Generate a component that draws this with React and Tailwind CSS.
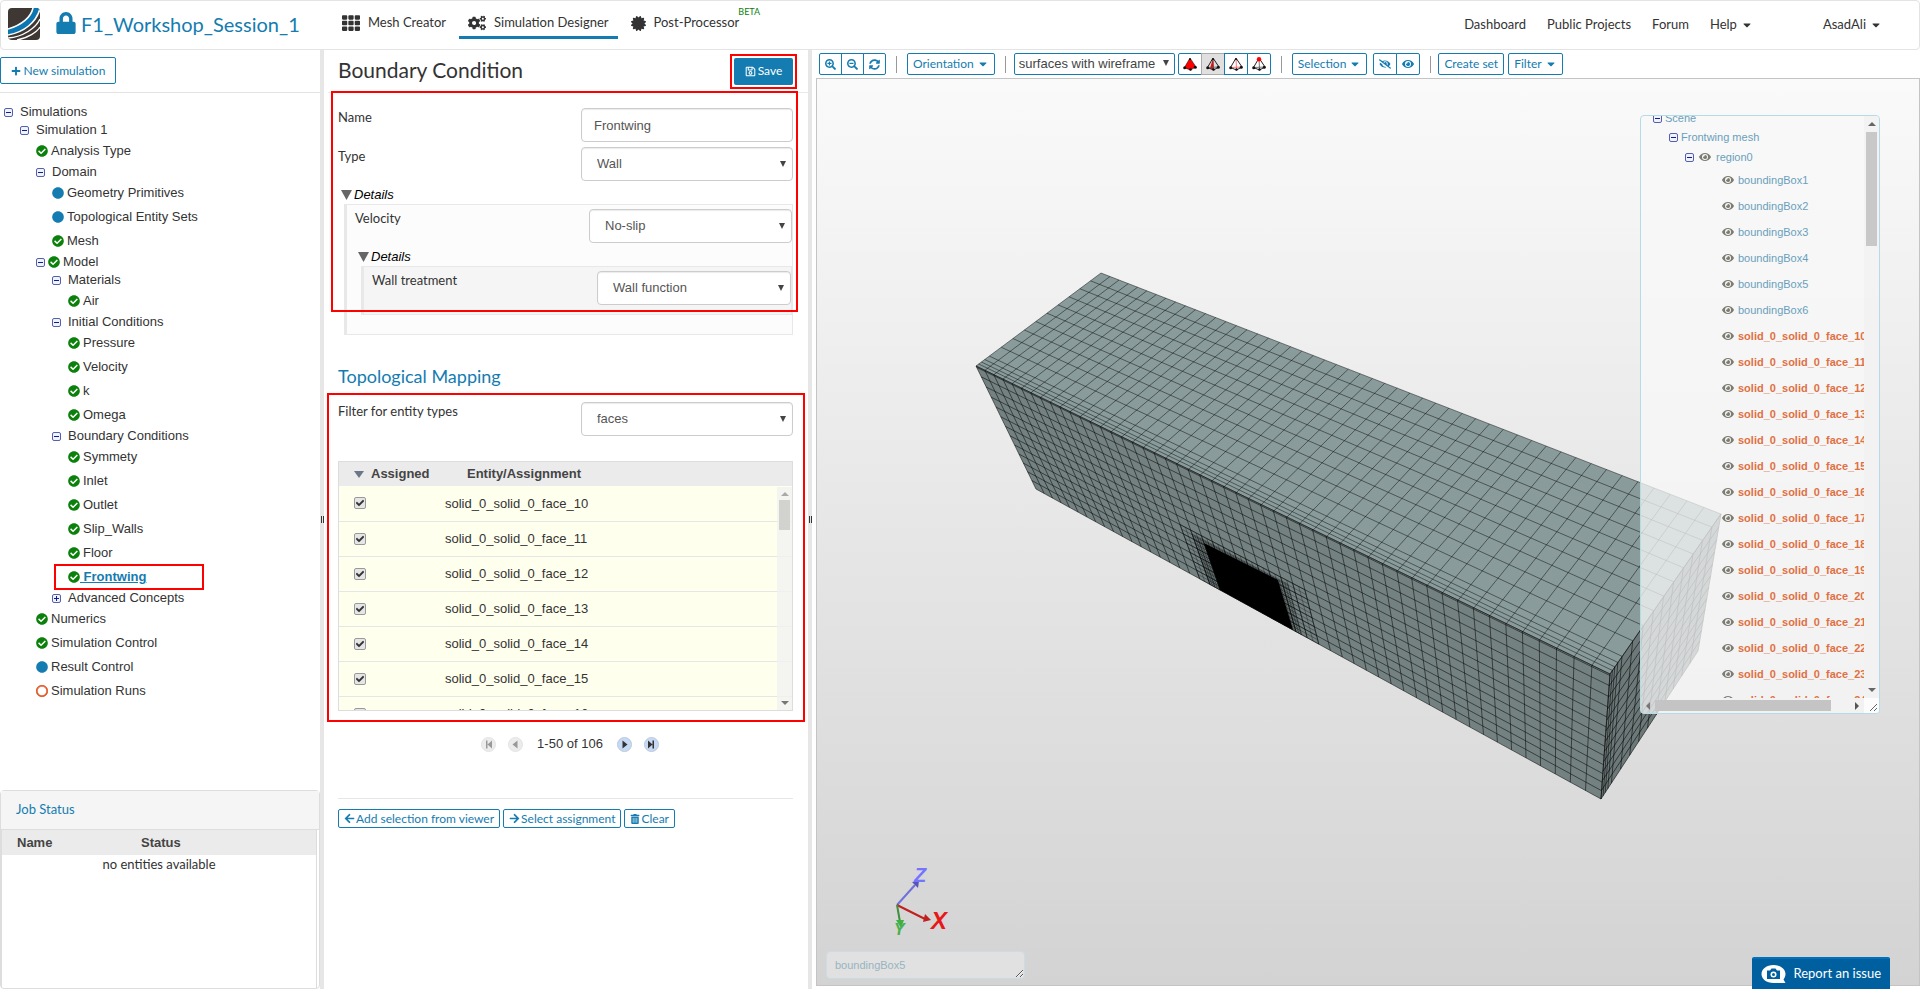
import {
  FaLock, FaTh, FaCogs, FaCertificate, FaPlus, FaRegSave, FaCheckCircle, FaCircle, FaRegCircle, FaEye, FaEyeSlash,
  FaArrowLeft, FaArrowRight, FaTrashAlt, FaCaretDown, FaSearchPlus, FaSearchMinus, FaSyncAlt, FaCheck,
} from 'react-icons/fa'

const treeRows = [
  { level: 0, label: 'Simulations', toggle: 'minus' },
  { level: 1, label: 'Simulation 1', toggle: 'minus' },
  { level: 2, label: 'Analysis Type', status: 'ok' },
  { level: 2, label: 'Domain', toggle: 'minus' },
  { level: 3, label: 'Geometry Primitives', status: 'info' },
  { level: 3, label: 'Topological Entity Sets', status: 'info' },
  { level: 3, label: 'Mesh', status: 'ok' },
  { level: 2, label: 'Model', toggle: 'minus', status: 'ok' },
  { level: 3, label: 'Materials', toggle: 'minus' },
  { level: 4, label: 'Air', status: 'ok' },
  { level: 3, label: 'Initial Conditions', toggle: 'minus' },
  { level: 4, label: 'Pressure', status: 'ok' },
  { level: 4, label: 'Velocity', status: 'ok' },
  { level: 4, label: 'k', status: 'ok' },
  { level: 4, label: 'Omega', status: 'ok' },
  { level: 3, label: 'Boundary Conditions', toggle: 'minus' },
  { level: 4, label: 'Symmety', status: 'ok' },
  { level: 4, label: 'Inlet', status: 'ok' },
  { level: 4, label: 'Outlet', status: 'ok' },
  { level: 4, label: 'Slip_Walls', status: 'ok' },
  { level: 4, label: 'Floor', status: 'ok' },
  { level: 4, label: 'Frontwing', status: 'ok', active: true },
  { level: 3, label: 'Advanced Concepts', toggle: 'plus' },
  { level: 2, label: 'Numerics', status: 'ok' },
  { level: 2, label: 'Simulation Control', status: 'ok' },
  { level: 2, label: 'Result Control', status: 'info' },
  { level: 2, label: 'Simulation Runs', status: 'open' },
]

const indents = ['pl-1', 'pl-5', 'pl-9', 'pl-[52px]', 'pl-[68px]']

const faces = [10, 11, 12, 13, 14, 15, 16]
const boxes = [1, 2, 3, 4, 5, 6]
const sceneFaces = [10, 11, 12, 13, 14, 15, 16, 17, 18, 19, 20, 21, 22, 23, 24]

const toolButton = 'flex h-[22px] items-center border border-[#147cb0] bg-white text-[#147cb0]'

const Toggle = ({ type }) => (
  <svg viewBox="0 0 9 9" className="size-[9px] shrink-0" aria-hidden="true">
    <rect x="0.5" y="0.5" width="8" height="8" rx="1.5" fill="#f1f3fb" stroke="#5560ad" />
    <path d={type === 'plus' ? 'M2 4.5h5M4.5 2v5' : 'M2 4.5h5'} stroke="#0f1a9c" />
  </svg>
)

const Status = ({ status }) => {
  if (status === 'ok') return <FaCheckCircle size={12} className="shrink-0 text-[#0b800b]" />
  if (status === 'info') return <FaCircle size={12} className="shrink-0 text-[#147cb0]" />
  return (
    <FaRegCircle size={12} stroke="#e0531f" strokeWidth={28} className="shrink-0 text-[#e0531f]" />
  )
}

const Highlight = ({ className }) => (
  <div className={`pointer-events-none absolute z-10 border-2 border-[#ff0000] ${className}`} />
)

const TopBar = () => (
  <header className="flex h-[50px] shrink-0 items-center rounded border border-[#e3e3e3] bg-white pl-[7px] pr-[37px] text-[#333333]">
    <svg viewBox="0 0 32 32" className="mb-[2px] size-8 shrink-0" aria-label="SimScale">
      <defs>
        <clipPath id="logo">
          <rect width="32" height="32" rx="4" />
        </clipPath>
      </defs>
      <g clipPath="url(#logo)">
        <rect width="32" height="32" fill="#3e3733" />
        <path d="M0 21C14 17 23 9 25 0h7v1C28 14 17 24 0 27z" fill="#0c76b2" />
        <path d="M0 21C14 17 23 9 25 0" fill="none" stroke="#fff" strokeWidth="1.6" />
        <path d="M0 27C17 24 28 14 32 1" fill="none" stroke="#fff" strokeWidth="1.6" />
        <path d="M0 30C15 29 28 20 32 11M9 32C20 30 29 24 32 19" fill="none" stroke="#fff" strokeWidth="1.4" />
      </g>
    </svg>
    <FaLock size={22} className="ml-[15px] mb-[5px] shrink-0 text-[#147cb0]" />
    <h1 className="mb-[2px] ml-1 w-[252px] shrink-0 text-[20px] leading-6 text-[#147cb0]">F1_Workshop_Session_1</h1>
    <nav className="mb-1 flex items-center gap-1 whitespace-nowrap text-[13px]">
      <a href="#mesh" className="flex h-[31px] items-center gap-2 px-[9px]">
        <FaTh size={18} /> Mesh Creator
      </a>
      <a href="#simulation" className="flex h-[31px] items-center gap-2 border-b-[3px] border-[#147cb0] px-[9px] pt-[3px]">
        <FaCogs size={18} /> Simulation Designer
      </a>
      <a href="#post" className="relative flex h-[31px] items-center gap-2 px-[9px]">
        <FaCertificate size={15} /> Post-Processor
        <span className="absolute -top-[2px] left-full -ml-[10px] text-[9px] leading-3 text-[#0b800b]">BETA</span>
      </a>
    </nav>
    <nav className="mb-px ml-auto flex items-center gap-[21px] whitespace-nowrap text-[13px]">
      <a href="#dashboard">Dashboard</a>
      <a href="#projects">Public Projects</a>
      <a href="#forum">Forum</a>
      <button className="flex items-center gap-1">
        Help <FaCaretDown size={12} />
      </button>
      <button className="ml-[49px] flex items-center gap-1">
        AsadAli <FaCaretDown size={12} />
      </button>
    </nav>
  </header>
)

const Splitter = () => (
  <div className="flex w-1 shrink-0 items-center justify-center bg-[#e6e6e6]">
    <div className="h-[7px] w-[3px] border-x border-[#333333]" />
  </div>
)

const SimulationTree = () => (
  <ul className="pt-[10px] font-['Liberation_Sans',sans-serif] text-[13px]">
    {treeRows.map(({ level, label, toggle, status, active }) => (
      <li key={label} className={`relative flex items-center ${toggle ? 'h-[18px]' : 'h-6'} ${indents[level]}`}>
        {toggle && <Toggle type={toggle} />}
        {toggle && <span className={status ? 'w-[3px]' : 'w-[7px]'} />}
        {status && <Status status={status} />}
        <a
          href="#node"
          className={active ? 'whitespace-pre font-bold text-[#147cb0] underline' : status ? 'pl-[3px] text-[#333333]' : 'text-[#333333]'}
        >
          {active ? ` ${label}` : label}
        </a>
        {active && <Highlight className="left-[54px] -top-[1px] h-[26px] w-[150px]" />}
      </li>
    ))}
  </ul>
)

const JobStatus = () => (
  <section className="mt-auto rounded border border-[#dddddd]">
    <h2 className="flex h-[39px] items-center border-b border-[#dddddd] bg-[#f5f5f5] pl-[15px] text-[13px] text-[#147cb0]">Job Status</h2>
    <div className="mr-[2px] h-[158px] border-x border-[#dddddd]">
      <table className="w-full table-fixed text-left">
        <thead className="bg-[#ebebeb] font-['Liberation_Sans',sans-serif] text-[13px] text-[#444444]">
          <tr className="h-[25px]">
            <th className="w-[123px] pl-[15px]">Name</th>
            <th className="pl-4">Status</th>
          </tr>
        </thead>
        <tbody>
          <tr className="h-[18px]">
            <td colSpan={2} className="p-0 text-center text-[13px] leading-[18px]">no entities available</td>
          </tr>
        </tbody>
      </table>
    </div>
  </section>
)

const Sidebar = () => (
  <aside className="flex w-80 shrink-0 flex-col">
    <div className="h-[43px] border-b border-[#e3e3e3] pt-[7px]">
      <button className="flex h-[27px] w-[116px] items-center justify-center gap-[3px] rounded-[2px] border border-[#147cb0] text-xs text-[#147cb0]">
        <FaPlus size={10} /> New simulation
      </button>
    </div>
    <SimulationTree />
    <JobStatus />
  </aside>
)

const SelectField = ({ id, label, value, width, className = '' }) => (
  <div className={`flex items-start justify-between ${className}`}>
    <label htmlFor={id} className="text-[13px] leading-[18px]">{label}</label>
    <div className={`relative ${width}`}>
      <select
        id={id}
        className="h-[34px] w-full appearance-none rounded border border-[#cccccc] bg-white pl-[15px] font-['Liberation_Sans',sans-serif] text-[13px] text-[#555555] shadow-[inset_0_1px_1px_rgba(0,0,0,0.08)]"
      >
        <option>{value}</option>
      </select>
      <svg viewBox="0 0 6 6" className="pointer-events-none absolute right-[7px] top-[14px] size-[6px]">
        <path d="M0 0h6L3 6z" fill="#444" />
      </svg>
    </div>
  </div>
)

const Details = ({ children, className, box }) => (
  <div className={className}>
    <div className="flex h-[18px] items-center gap-[2px] font-['Liberation_Sans',sans-serif] text-[13px] italic text-black">
      <svg viewBox="0 0 11 10" className="h-[10px] w-[11px]">
        <path d="M0 0h11L5.5 10z" fill="#666" />
      </svg>
      Details
    </div>
    <div className={`ml-[3px] border border-l-[3px] border-[#e8e8e8] pt-1 ${box}`}>{children}</div>
  </div>
)

const BoundaryForm = () => (
  <form className="relative pt-[15px]">
    <div className="flex items-start justify-between">
      <label htmlFor="name" className="text-[13px] leading-[18px]">Name</label>
      <input
        id="name"
        defaultValue="Frontwing"
        className="h-[34px] w-[212px] rounded border border-[#cccccc] px-3 font-['Liberation_Sans',sans-serif] text-[13px] text-[#555555] shadow-[inset_0_1px_1px_rgba(0,0,0,0.08)]"
      />
    </div>
    <SelectField id="type" label="Type" value="Wall" width="w-[212px]" className="mt-[5px]" />
    <Details className="ml-[3px] mt-[5px]" box="bg-[#fcfcfc] pb-[19px]">
      <SelectField id="velocity" label="Velocity" value="No-slip" width="w-[203px]" className="pl-2" />
      <Details className="ml-[11px] mt-[5px]" box="bg-[#f5f5f5] pb-[9px]">
        <SelectField id="treatment" label="Wall treatment" value="Wall function" width="w-[194px]" className="pl-2" />
      </Details>
    </Details>
    <Highlight className="-left-[7px] -right-[5px] -top-[2px] bottom-[23px]" />
  </form>
)

const EntityTable = () => (
  <div className="relative mt-[25px] h-[250px] overflow-hidden border border-[#dddddd] font-['Liberation_Sans',sans-serif] text-[13px]">
    <table className="w-full table-fixed border-collapse text-left">
      <thead className="bg-[#ebebeb] text-[#444444]">
        <tr className="h-6">
          <th className="w-[106px] p-0 pl-[15px]">
            <span className="flex items-center gap-[7px]">
              <svg viewBox="0 0 10 7" className="h-[7px] w-[10px]">
                <path d="M0 0h10L5 7z" fill="#6b7787" />
              </svg>
              Assigned
            </span>
          </th>
          <th className="p-0 pl-[22px]">Entity/Assignment</th>
        </tr>
      </thead>
      <tbody className="bg-[#ffffee]">
        {faces.map((n) => (
          <tr key={n} className="h-[35px] border-b border-[#e6e6e6]">
            <td className="p-0 pl-[15px]">
              <span className="relative flex size-3 items-center justify-center">
                <input
                  type="checkbox"
                  defaultChecked
                  aria-label={`Assign face ${n}`}
                  className="size-3 appearance-none rounded-[2px] border border-[#999999] bg-[#e6e6e6]"
                />
                <FaCheck size={8} stroke="#333" strokeWidth={40} className="pointer-events-none absolute text-[#333333]" />
              </span>
            </td>
            <td className="p-0">solid_0_solid_0_face_{n}</td>
          </tr>
        ))}
      </tbody>
    </table>
    <div className="absolute bottom-0 right-0 top-[25px] flex w-[15px] flex-col items-center bg-[#f1f1f1]/80 py-[5px]">
      <svg viewBox="0 0 8 4" className="h-1 w-2">
        <path d="M4 0l4 4H0z" fill="#aaa" />
      </svg>
      <div className="mt-1 h-[30px] w-[11px] bg-[#d2d2ce]" />
      <svg viewBox="0 0 8 4" className="mt-auto h-1 w-2">
        <path d="M0 0h8L4 4z" fill="#777" />
      </svg>
    </div>
  </div>
)

const pagerShapes = {
  first: 'M5 3.5h1.5v8H5zM11 3.5v8L6.5 7.5z',
  prev: 'M9.5 3.5v8L4.5 7.5z',
  next: 'M5.5 3.5v8L10.5 7.5z',
  last: 'M4 3.5v8L8.5 7.5zM8.5 3.5H10v8H8.5z',
}

const PagerButton = ({ kind, enabled }) => (
  <button aria-label={kind} disabled={!enabled}>
    <svg viewBox="0 0 15 15" className="size-[15px]">
      <circle cx="7.5" cy="7.5" r="7" fill={enabled ? '#c6d9f5' : '#ececec'} stroke={enabled ? '#bcc8da' : '#e3e3e3'} />
      <path d={pagerShapes[kind]} fill={enabled ? '#333' : '#999'} />
    </svg>
  </button>
)

const actionButton = 'flex h-[19px] items-center gap-px rounded-[2px] border border-[#147cb0] px-[5px] text-xs text-[#147cb0]'

const ConditionPanel = () => (
  <main className="w-[484px] shrink-0 pl-1">
    <div className="flex h-[43px] items-center justify-between border-b border-[#e9e9e9] pl-[10px] pr-[15px]">
      <h2 className="mb-[2px] text-[21px] leading-6">Boundary Condition</h2>
      <div className="relative">
        <button className="flex h-[27px] w-[59px] items-center justify-center gap-[2px] rounded-[2px] bg-[#147cb0] text-xs text-white">
          <FaRegSave size={11} /> Save
        </button>
        <Highlight className="-inset-1" />
      </div>
    </div>
    <div className="pl-[10px] pr-[15px]">
      <BoundaryForm />
      <h3 className="mt-[29px] text-lg leading-6 text-[#147cb0]">Topological Mapping</h3>
      <div className="relative mt-[14px]">
        <SelectField id="entity-filter" label="Filter for entity types" value="faces" width="w-[212px]" />
        <EntityTable />
        <Highlight className="-left-[11px] -right-3 -top-[9px] -bottom-[11px]" />
      </div>
      <div className="mt-[23px] flex h-5 items-center justify-center gap-3 pl-[9px] font-['Liberation_Sans',sans-serif] text-[13px]">
        <PagerButton kind="first" />
        <PagerButton kind="prev" />
        <span className="px-[2px]">1-50 of 106</span>
        <PagerButton kind="next" enabled />
        <PagerButton kind="last" enabled />
      </div>
      <div className="mt-11 flex gap-[3px] border-t border-[#e6e6e6] pt-[10px]">
        <button className={actionButton}><FaArrowLeft size={11} /> Add selection from viewer</button>
        <button className={actionButton}><FaArrowRight size={11} /> Select assignment</button>
        <button className={actionButton}><FaTrashAlt size={10} /> Clear</button>
      </div>
    </div>
  </main>
)

const Tetra = ({ kind }) => (
  <svg viewBox="0 0 14 14" className="size-[14px]">
    {kind === 'volume' && <path d="M7 1L1 11l6 2 6-3z" fill="#f00" />}
    {kind === 'face' && <path d="M7 1L4 11.5l4 1z" fill="#f00" />}
    <path d="M7 1L1.5 10.5 7.5 13l5.500-3z" fill="none" stroke="#222" strokeWidth={kind === 'volume' ? 0.6 : 1} />
    {kind !== 'volume' && (
      <path d="M1.5 10.5L13 10M7 1l.5 11.5" fill="none" stroke={kind === 'edge' ? '#f55' : '#555'} strokeWidth="0.8" />
    )}
    <circle cx="1.7" cy="10.7" r="1.5" fill="#111" />
    <circle cx="7.5" cy="12.5" r="1.3" fill="#111" />
    <circle cx="12.3" cy="10.2" r="1.5" fill="#111" />
    <circle cx="7" cy="2.2" r={kind === 'point' ? 2.2 : 1} fill={kind === 'point' ? '#f00' : '#111'} />
  </svg>
)

const Separator = () => <div className="h-[17px] w-px bg-[#999999]" />

const Toolbar = () => (
  <div className="flex h-7 items-center gap-[10px] whitespace-nowrap pl-[3px] text-xs">
    <div className="flex">
      <button aria-label="Zoom in" className={`${toolButton} w-[23px] justify-center rounded-l-[2px]`}><FaSearchPlus size={11} /></button>
      <button aria-label="Zoom out" className={`${toolButton} -ml-px w-[23px] justify-center`}><FaSearchMinus size={11} /></button>
      <button aria-label="Reset view" className={`${toolButton} -ml-px w-[23px] justify-center rounded-r-[2px]`}><FaSyncAlt size={11} /></button>
    </div>
    <Separator />
    <button className={`${toolButton} gap-[3px] rounded-[2px] px-[5px]`}>Orientation <FaCaretDown size={12} /></button>
    <Separator />
    <div className="-ml-[2px] flex items-center gap-[3px]">
      <div className="relative">
        <select
          aria-label="Render mode"
          className="block h-[22px] w-[161px] appearance-none rounded-[2px] border border-[#147cb0] bg-white pl-1 font-['Liberation_Sans',sans-serif] text-[13px] text-[#444444]"
        >
          <option>surfaces with wireframe</option>
        </select>
        <svg viewBox="0 0 6 6" className="pointer-events-none absolute right-[6px] top-[7px] size-[6px]">
          <path d="M0 0h6L3 6z" fill="#444" />
        </svg>
      </div>
      <div className="flex">
        <button aria-label="Pick volumes" className={`${toolButton} w-6 justify-center rounded-l-[2px]`}><Tetra kind="volume" /></button>
        <button aria-label="Pick faces" className="-ml-px flex h-[22px] w-6 items-center justify-center border border-[#aaaaaa] bg-[#e0e0e0]"><Tetra kind="face" /></button>
        <button aria-label="Pick edges" className={`${toolButton} -ml-px w-6 justify-center`}><Tetra kind="edge" /></button>
        <button aria-label="Pick points" className={`${toolButton} -ml-px w-6 justify-center rounded-r-[2px]`}><Tetra kind="point" /></button>
      </div>
    </div>
    <Separator />
    <button className={`${toolButton} gap-[3px] rounded-[2px] px-[5px]`}>Selection <FaCaretDown size={12} /></button>
    <div className="-ml-1 flex">
      <button aria-label="Hide" className={`${toolButton} w-6 justify-center rounded-l-[2px]`}><FaEyeSlash size={12} /></button>
      <button aria-label="Show" className={`${toolButton} -ml-px w-6 justify-center rounded-r-[2px]`}><FaEye size={12} /></button>
    </div>
    <Separator />
    <div className="-ml-[3px] flex gap-1">
      <button className={`${toolButton} rounded-[2px] px-[5px]`}>Create set</button>
      <button className={`${toolButton} gap-[3px] rounded-[2px] px-[5px]`}>Filter <FaCaretDown size={12} /></button>
    </div>
  </div>
)

// Maps (u, v) in the unit square onto a quad given clockwise from (0, 0)
const projector = ([[x0, y0], [x1, y1], [x2, y2], [x3, y3]]) => {
  const dx1 = x1 - x2, dx2 = x3 - x2, sx = x0 - x1 + x2 - x3
  const dy1 = y1 - y2, dy2 = y3 - y2, sy = y0 - y1 + y2 - y3
  const den = dx1 * dy2 - dx2 * dy1
  const g = (sx * dy2 - dx2 * sy) / den
  const h = (dx1 * sy - sx * dy1) / den
  return (u, v) => {
    const w = 1 + g * u + h * v
    const x = ((x1 - x0 + g * x1) * u + (x3 - x0 + h * x3) * v + x0) / w
    const y = ((y1 - y0 + g * y1) * u + (y3 - y0 + h * y3) * v + y0) / w
    return `${x.toFixed(1)} ${y.toFixed(1)}`
  }
}

const range = (from, to, n) => Array.from({ length: n + 1 }, (_, i) => from + ((to - from) * i) / n)

const gridPath = (at, us, vs) => {
  const [u0, u1, v0, v1] = [us[0], us[us.length - 1], vs[0], vs[vs.length - 1]]
  return [
    ...us.map((u) => `M${at(u, v0)}L${at(u, v1)}`),
    ...vs.map((v) => `M${at(u0, v)}L${at(u1, v)}`),
  ].join('')
}

const backLeft = [1101, 273], left = [976, 366], front = [1610, 674], right = [1721, 514]
const lowLeft = [1036, 489], lowFront = [1601, 799], lowRight = [1698, 651]

const topAt = projector([left, front, right, backLeft])
const sideAt = projector([left, front, lowFront, lowLeft])
const endAt = projector([front, right, lowRight, lowFront])
const quad = (points) => points.map((p) => p.join(',')).join(' ')

const layers = [0, 0.02, 0.04, 0.065]

const MeshView = () => (
  <svg viewBox="817 79 1102 906" className="absolute inset-0 h-full w-full" role="img" aria-label="Mesh of the flow domain">
    <polygon points={quad([left, front, right, backLeft])} fill="#899b9b" />
    <polygon points={quad([left, front, lowFront, lowLeft])} fill="#748181" />
    <polygon points={quad([front, right, lowRight, lowFront])} fill="#6d7979" />
    <g fill="none" stroke="#000" strokeWidth="0.7">
      <path d={gridPath(topAt, range(0, 1, 50), [...layers, ...range(0.1, 1, 10)])} strokeOpacity="0.65" />
      <path d={gridPath(sideAt, range(0, 1, 50), [0, 0.01, ...range(0.08, 1, 12)])} strokeOpacity="0.75" />
      <path d={gridPath(endAt, [...layers, ...range(0.1, 1, 10)], range(0, 1, 12))} strokeOpacity="0.8" />
    </g>
    <g fill="none" stroke="#000" strokeWidth="0.5" strokeOpacity="0.6">
      <path d={gridPath(sideAt, range(0.36, 0.58, 22), range(0.54, 1, 12))} />
      <path d={gridPath(sideAt, range(0.38, 0.55, 34), range(0.57, 1, 24))} />
    </g>
    <polygon points={[sideAt(0.4, 0.6), sideAt(0.533, 0.58), sideAt(0.535, 1), sideAt(0.4, 1)].join(' ')} fill="#000" />

    {/* Orientation axes */}
    <g strokeWidth="2" fontSize="20" fontWeight="bold" fontStyle="italic" fontFamily="Liberation Sans, sans-serif">
      <path d="M897 905L915 885" stroke="#7070dd" />
      <path d="M912 882l7-1-1 7z" fill="#5555b5" />
      <path d="M897 905L925 919" stroke="#c02020" />
      <path d="M925 914l6 6-8 2z" fill="#c02020" />
      <path d="M897 905L900 922" stroke="#409040" />
      <path d="M896 920h8l-3 8z" fill="#40b040" />
      <text x="914" y="882" fill="#7474ff">Z</text>
      <text x="931" y="929" fontSize="24" fill="#e81818">X</text>
      <text x="894" y="935" fontSize="16" fill="#48b048">Y</text>
    </g>
  </svg>
)

const SceneTree = () => (
  <div className="absolute right-[39px] top-9 flex h-[599px] w-60 flex-col overflow-hidden rounded border border-[#b4dce6] bg-[#f8f8f8]/75 font-['Liberation_Sans',sans-serif] text-[11px] text-[#6a9fbc]">
    <div className="flex min-h-0 flex-1">
      <div className="min-w-0 flex-1 overflow-hidden whitespace-nowrap">
        <div className="-mt-2 flex h-5 items-center gap-[3px] pl-3"><Toggle type="minus" /> Scene</div>
        <div className="flex h-[19px] items-center gap-[3px] pl-7"><Toggle type="minus" /> Frontwing mesh</div>
        <div className="flex h-5 items-center gap-[5px] pl-11">
          <Toggle type="minus" /> <FaEye size={12} className="text-[#7c7c72]" /> region0
        </div>
        <ul>
          {boxes.map((n) => (
            <li key={n} className="flex h-[26px] items-center gap-1 pl-[81px]">
              <FaEye size={12} className="shrink-0 text-[#7c7c72]" /> boundingBox{n}
            </li>
          ))}
          {sceneFaces.map((n) => (
            <li key={n} className="flex h-[26px] items-center gap-1 pl-[81px] font-bold text-[#e07044]">
              <FaEye size={12} className="shrink-0 text-[#7c7c72]" /> solid_0_solid_0_face_{n}
            </li>
          ))}
        </ul>
      </div>
      <div className="flex w-[15px] shrink-0 flex-col items-center bg-[#f1f1f1]/80 py-[6px]">
        <svg viewBox="0 0 8 4" className="h-1 w-2"><path d="M4 0l4 4H0z" fill="#666" /></svg>
        <div className="mt-[6px] h-[114px] w-[11px] bg-[#c8c8c8]" />
        <svg viewBox="0 0 8 4" className="mt-auto h-1 w-2"><path d="M0 0h8L4 4z" fill="#666" /></svg>
      </div>
    </div>
    <div className="flex h-[15px] items-center">
      <svg viewBox="0 0 4 8" className="ml-[5px] h-2 w-1"><path d="M4 0v8L0 4z" fill="#777" /></svg>
      <div className="ml-[5px] h-[11px] w-44 bg-[#c4c4c4]" />
      <svg viewBox="0 0 4 8" className="ml-6 h-2 w-1"><path d="M0 0v8l4-4z" fill="#555" /></svg>
      <svg viewBox="0 0 15 15" className="ml-auto size-[15px] bg-white/80">
        <path d="M6 13l7-7M10 13l3-3" stroke="#666" />
      </svg>
    </div>
  </div>
)

const Viewer = () => (
  <section className="flex min-w-0 flex-1 flex-col pb-[3px] pl-1">
    <Toolbar />
    <div className="relative min-h-0 flex-1 overflow-hidden border border-[#c4c4c4] bg-gradient-to-b from-[#fafafa] to-[#d3d3d3]">
      <MeshView />
      <SceneTree />
      <textarea
        aria-label="Hovered entity"
        readOnly
        defaultValue="boundingBox5"
        className="absolute bottom-[6px] left-[9px] h-[28px] w-[199px] rounded border border-[#cddbe2] bg-white/30 px-2 py-[5px] font-['Liberation_Sans',sans-serif] text-[11px] leading-4 text-[#97b4c0]"
      />
    </div>
  </section>
)

const ReportButton = () => (
  <button className="fixed bottom-0 right-[30px] flex h-8 items-center gap-2 whitespace-nowrap rounded-t-[2px] border-t-2 border-[#0072bb] bg-[#00609f] px-[9px] text-[13px] text-white">
    <svg viewBox="0 0 25 18" className="h-[18px] w-[25px]">
      <path d="M12.5 0c7 0 12 4 12 9 0 2-1 4-2 5.5l2 3.5h-12C5.5 18 .5 14 .5 9s5-9 12-9z" fill="#fff" />
      <path d="M6 5.5h3l1.5-2h4l1.5 2h3V14H6z" fill="#00609f" />
      <circle cx="12.5" cy="9.5" r="3" fill="#fff" />
      <circle cx="12.5" cy="9.5" r="1.5" fill="#00609f" />
    </svg>
    Report an issue
  </button>
)

const App = () => (
  <div className="flex min-h-screen flex-col bg-white font-[Lato,sans-serif] text-[#333333]">
    <TopBar />
    <div className="flex flex-1">
      <Sidebar />
      <Splitter />
      <ConditionPanel />
      <Splitter />
      <Viewer />
    </div>
    <ReportButton />
  </div>
)

export default App
